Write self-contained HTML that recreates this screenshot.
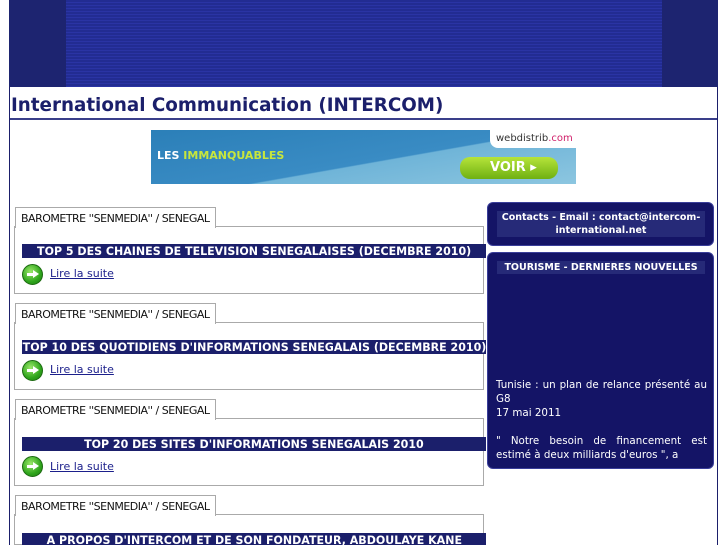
<!DOCTYPE html>
<html><head><meta charset="utf-8"><style>
*{margin:0;padding:0;box-sizing:border-box}
html,body{width:727px;height:545px;overflow:hidden}
body{background:#fff;font-family:"DejaVu Sans","Liberation Sans",sans-serif;position:relative}
.a{position:absolute}
.frame{left:9px;top:0;width:709px;height:545px;border-left:1px solid #1b1f6b;border-right:1px solid #1b1f6b}
.head{left:9px;top:0;width:709px;height:87px;background:#1d2470}
.himg{left:66px;top:0;width:596px;height:87px;background:repeating-linear-gradient(0deg,#2a34a4 0 1px,#222c92 1px 3px);}
.title{left:11px;top:95px;font-size:18.3px;font-weight:bold;color:#1b1f6b;white-space:nowrap}
.uline{left:10px;top:118px;width:707px;height:2px;background:#3a3f8a}
.ban{left:151px;top:130px;width:425px;height:54px;background:linear-gradient(170deg,#2b7fb8 0%,#3a8cc4 55%,#6fb4d8 56%,#8cc6e0 100%)}
.tab{width:201px;height:21px;border:1px solid #aaa;border-bottom:none;background:#fff;font-size:11px;padding:4px 0 0 5px;white-space:nowrap;color:#111;letter-spacing:-0.5px}
.box{width:470px;height:68px;border:1px solid #aaa;background:#fff}
.bar{width:464px;height:14px;background:#1b1f6b;color:#fff;font-size:11.5px;font-weight:bold;line-height:14px;white-space:nowrap;overflow:hidden;display:flex;justify-content:center}
.bar span{display:inline-block;transform:scaleX(0.96)}
.ico{width:21px;height:21px;border-radius:50%;background:radial-gradient(circle at 40% 35%,#9be86a,#2fa51c 60%,#1c7a10);border:1px solid #1c6a10}
.ico:after{content:"";position:absolute;left:4px;top:8px;width:8px;height:3px;background:#fff}
.ico:before{content:"";position:absolute;left:10px;top:5px;border-left:6px solid #fff;border-top:4.5px solid transparent;border-bottom:4.5px solid transparent}
.lnk{font-size:11px;color:#1b1f8b;text-decoration:underline}
.rb{background:#141466;border-radius:6px;border:1px solid #3a3e9a}
.rt{background:#262a78;color:#fff;font-size:9.5px;font-weight:bold;text-align:center}
.rtext{color:#fff;font-size:10.3px;line-height:14px}
</style></head><body>
<div class="a frame"></div>
<div class="a head"></div>
<div class="a himg"></div>
<div class="a title">International Communication (INTERCOM)</div>
<div class="a uline"></div>
<div class="a ban">
 <div class="a" style="left:6px;top:19px;font-size:11px;font-weight:bold;color:#fff">LES <span style="color:#c8e63c">IMMANQUABLES</span></div>
 <div class="a" style="right:0;top:0;width:86px;height:18px;background:#fff;border-bottom-left-radius:8px;font-size:10px;color:#333;padding:3px 0 0 6px">webdistrib<span style="color:#d0206a">.com</span></div>
 <div class="a" style="left:309px;top:27px;width:98px;height:22px;border-radius:10px;background:linear-gradient(#b6e43a,#6fb012);color:#fff;font-weight:bold;font-size:13px;padding:3px 0 0 30px">VOIR ▸</div>
</div>

<div class="a box" style="left:14px;top:226px"></div>
<div class="a tab" style="left:15px;top:207px">BAROMETRE ''SENMEDIA'' / SENEGAL</div>
<div class="a bar" style="left:22px;top:244px"><span>TOP 5 DES CHAINES DE TELEVISION SENEGALAISES (DECEMBRE 2010)</span></div>
<div class="a ico" style="left:22px;top:264px"></div>
<div class="a lnk" style="left:50px;top:267px">Lire la suite</div>

<div class="a box" style="left:14px;top:322px"></div>
<div class="a tab" style="left:15px;top:303px">BAROMETRE ''SENMEDIA'' / SENEGAL</div>
<div class="a bar" style="left:22px;top:340px"><span>TOP 10 DES QUOTIDIENS D'INFORMATIONS SENEGALAIS (DECEMBRE 2010)</span></div>
<div class="a ico" style="left:22px;top:360px"></div>
<div class="a lnk" style="left:50px;top:363px">Lire la suite</div>

<div class="a box" style="left:14px;top:418px"></div>
<div class="a tab" style="left:15px;top:399px">BAROMETRE ''SENMEDIA'' / SENEGAL</div>
<div class="a bar" style="left:22px;top:437px"><span>TOP 20 DES SITES D'INFORMATIONS SENEGALAIS 2010</span></div>
<div class="a ico" style="left:22px;top:456px"></div>
<div class="a lnk" style="left:50px;top:460px">Lire la suite</div>

<div class="a box" style="left:14px;top:514px;height:31px"></div>
<div class="a tab" style="left:15px;top:495px">BAROMETRE ''SENMEDIA'' / SENEGAL</div>
<div class="a bar" style="left:22px;top:533px;height:12px"><span>A PROPOS D'INTERCOM ET DE SON FONDATEUR, ABDOULAYE KANE</span></div>

<div class="a rb" style="left:487px;top:202px;width:227px;height:44px"></div>
<div class="a rt" style="left:497px;top:211px;width:208px;height:26px;line-height:13px">Contacts - Email : contact@intercom-international.net</div>
<div class="a rb" style="left:487px;top:252px;width:227px;height:217px"></div>
<div class="a rt" style="left:497px;top:261px;width:208px;height:13px;line-height:13px">TOURISME - DERNIERES NOUVELLES</div>
<div class="a rtext" style="left:496px;top:378px;width:211px;text-align:justify">Tunisie : un plan de relance présenté au G8<br>17 mai 2011<br><br>" Notre besoin de financement est estimé à deux milliards d'euros ", a</div>
</body></html>
